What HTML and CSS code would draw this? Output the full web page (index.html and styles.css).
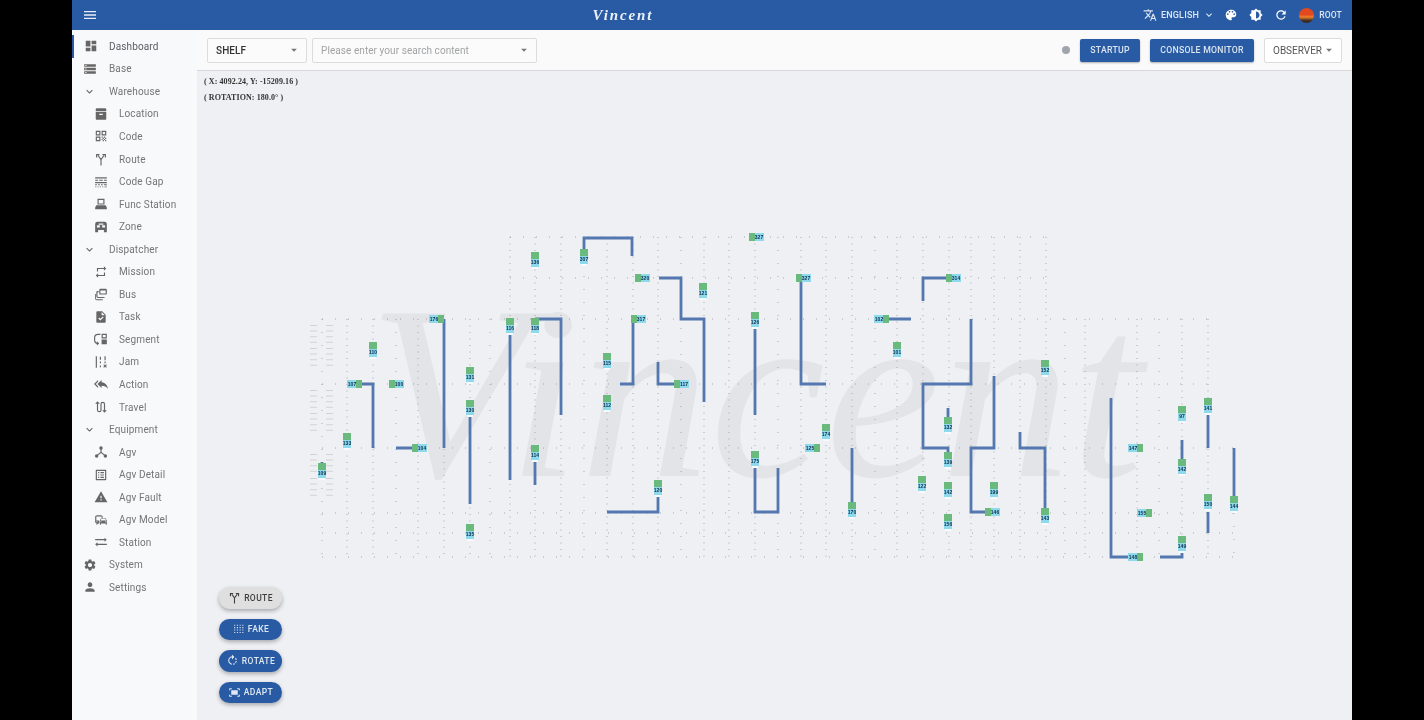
FILE: index.html
```html
<!DOCTYPE html>
<html lang="en">
<head>
<meta charset="utf-8">
<title>Vincent</title>
<link rel="stylesheet" href="styles.css">
</head>
<body>
<svg class="sprite" width="0" height="0" aria-hidden="true">
<defs>
<symbol id="i-menu" viewBox="0 0 24 24"><path d="M3 18h18v-2H3v2zm0-5h18v-2H3v2zm0-7v2h18V6H3z"/></symbol>
<symbol id="i-dash" viewBox="0 0 24 24"><path d="M3 13h8V3H3v10zm0 8h8v-6H3v6zm10 0h8V11h-8v10zm0-18v6h8V3h-8z"/></symbol>
<symbol id="i-storage" viewBox="0 0 24 24"><path d="M2 20h20v-4H2v4zm2-3h2v2H4v-2zM2 4v4h20V4H2zm4 3H4V5h2v2zm-4 7h20v-4H2v4zm2-3h2v2H4v-2z"/></symbol>
<symbol id="i-chev" viewBox="0 0 24 24"><path d="M16.59 8.59L12 13.17 7.41 8.59 6 10l6 6 6-6z"/></symbol>
<symbol id="i-location" viewBox="0 0 24 24"><path fill-rule="evenodd" d="M5 2h14a2 2 0 0 1 2 2v3H3V4a2 2 0 0 1 2-2zM3 8h18v12a2 2 0 0 1-2 2H5a2 2 0 0 1-2-2V8zm6 3.500v2h6v-2H9z"/></symbol>
<symbol id="i-qr" viewBox="0 0 24 24"><path d="M3 11h8V3H3v8zm2-6h4v4H5V5zM3 21h8v-8H3v8zm2-6h4v4H5v-4zM13 3v8h8V3h-8zm6 6h-4V5h4v4zM13 13h2v2h-2zM15 15h2v2h-2zM13 17h2v2h-2zM15 19h2v2h-2zM17 17h2v2h-2zM17 13h2v2h-2zM19 15h2v2h-2zM19 19h2v2h-2z"/></symbol>
<symbol id="i-route" viewBox="0 0 24 24"><path fill="none" stroke="currentColor" stroke-width="2" d="M12 23V13L7 6M12 13l5-7M4.500 9.500V4.500H9.500M14.500 4.500h5v5"/></symbol>
<symbol id="i-gap" viewBox="0 0 24 24"><path d="M2 4h20v2H2zM2 8h5v2H2zM9 8h6v2H9zM17 8h5v2h-5zM2 12h20v2H2zM2 16h3v1.500H2zM7 16h3v1.500H7zM12 16h3v1.500h-3zM17 16h5v1.500h-5zM2 19.500h2V21H2zM6 19.500h2V21H6zM10 19.500h2V21h-2zM14 19.500h2V21h-2zM18 19.500h4V21h-4z"/></symbol>
<symbol id="i-func" viewBox="0 0 24 24"><path fill-rule="evenodd" d="M6 3h12v10H6V3zm2 2v6h8V5H8zM4 14h16l2 4v3H2v-3l2-4z"/></symbol>
<symbol id="i-zone" viewBox="0 0 24 24"><path fill-rule="evenodd" d="M6 3h12a4 4 0 0 1 4 4v14h-5v-4H7v4H2V7a4 4 0 0 1 4-4zm-1 6v4h5V9H5zm9 0v4h5V9h-5zM8 6v2h8V6H8z"/></symbol>
<symbol id="i-repeat" viewBox="0 0 24 24"><path d="M7 7h10v3l4-4-4-4v3H5v6h2V7zm10 10H7v-3l-4 4 4 4v-3h12v-6h-2v4z"/></symbol>
<symbol id="i-bus" viewBox="0 0 24 24"><path fill-rule="evenodd" d="M11 3h9a2 2 0 0 1 2 2v6a2 2 0 0 1-2 2h-9a2 2 0 0 1-2-2V5a2 2 0 0 1 2-2zm0 3v5h9V6h-9zM6 7h2v2H6v7a1 1 0 0 0 1 1h11v2H7a3 3 0 0 1-3-3V9a2 2 0 0 1 2-2zM2 12h1.500v8a1 1 0 0 0 1 1H15v1.500H4.500A2.500 2.500 0 0 1 2 20v-8z"/></symbol>
<symbol id="i-task" viewBox="0 0 24 24"><path d="M14 2H6c-1.100 0-1.990.9-1.990 2L4 20c0 1.100.89 2 1.990 2H18c1.100 0 2-.9 2-2V8l-6-6zm-3.060 16L7.400 14.460l1.410-1.410 2.120 2.120 4.240-4.240 1.410 1.410L10.940 18zM13 9V3.500L18.500 9H13z"/></symbol>
<symbol id="i-segment" viewBox="0 0 24 24"><path fill-rule="evenodd" d="M13 3h9v8h-9V3zm2 2v4h5V5h-5zM13 13h9v8h-9v-8zM11 5H7a5 5 0 0 0-5 5v4a5 5 0 0 0 3 4.600V16l4 3.500L5 23v-2.200A7 7 0 0 1 0 14v-4a7 7 0 0 1 7-7h4v2z"/></symbol>
<symbol id="i-jam" viewBox="0 0 24 24"><path d="M3 2h2v20H3zM10 3h2v5h-2zM10 11h2v3h-2zM10 18h2v3h-2zM18 2h2v7h-2zM18 11h2v3h-2zM16 17l1.200-1.200 1.800 1.800 1.800-1.800L22 17l-1.800 1.800L22 20.600l-1.200 1.200-1.800-1.800-1.800 1.800-1.200-1.200 1.800-1.800z"/></symbol>
<symbol id="i-reply" viewBox="0 0 24 24"><path d="M7 8V5l-7 7 7 7v-3l-4-4 4-4zm6 1V5l-7 7 7 7v-4.100c5 0 8.500 1.600 11 5.100-1-5-4-10-11-11z"/></symbol>
<symbol id="i-travel" viewBox="0 0 24 24"><path d="M6 2L2 6.500h3V17a4 4 0 0 0 4 4 4 4 0 0 0 4-4V7a2 2 0 0 1 4 0v10.500h-3L18 22l4-4.500h-3V7a4 4 0 0 0-4-4 4 4 0 0 0-4 4v10a2 2 0 0 1-4 0V6.500h3z"/></symbol>
<symbol id="i-agv" viewBox="0 0 24 24"><circle cx="12" cy="5" r="3"/><circle cx="4.500" cy="19" r="3"/><circle cx="19.500" cy="19" r="3"/><path d="M11 7h2v5l6 5-1.300 1.500-5.700-4.700-5.700 4.700L5 17l6-5z"/></symbol>
<symbol id="i-list" viewBox="0 0 24 24"><path d="M19 5v14H5V5h14m1.100-2H3.900c-.5 0-.9.4-.9.9v16.200c0 .4.4.9.9.9h16.200c.4 0 .9-.5.9-.9V3.900c0-.5-.5-.9-.9-.9zM11 7h6v2h-6V7zm0 4h6v2h-6v-2zm0 4h6v2h-6zM7 7h2v2H7zm0 4h2v2H7zm0 4h2v2H7z"/></symbol>
<symbol id="i-warn" viewBox="0 0 24 24"><path d="M1 21h22L12 2 1 21zm12-3h-2v-2h2v2zm0-4h-2v-4h2v4z"/></symbol>
<symbol id="i-commute" viewBox="0 0 24 24"><path d="M12 4H5C3.340 4 2 5.340 2 7v8c0 1.660 1.340 3 3 3l-1 1v1h1l2-2.030L9 18v-5H4V5.980L13 6v2h2V7c0-1.660-1.340-3-3-3zM5 14c.55 0 1 .45 1 1s-.45 1-1 1-1-.45-1-1 .45-1 1-1zm15.570-4.340c-.14-.4-.52-.66-.97-.66h-7.190c-.46 0-.83.26-.98.66L10 13.770l.01 5.510c0 .38.31.72.69.72h.62c.38 0 .68-.38.68-.76V18h8v1.240c0 .38.31.76.69.76h.61c.38 0 .69-.34.69-.72l.01-1.370v-4.140l-1.430-4.070zm-8.160.34h7.190l1.030 3h-9.250l1.030-3zM12 16c-.55 0-1-.45-1-1s.45-1 1-1 1 .45 1 1-.45 1-1 1zm8 0c-.55 0-1-.45-1-1s.45-1 1-1 1 .45 1 1-.45 1-1 1z"/></symbol>
<symbol id="i-station" viewBox="0 0 24 24"><path d="M22 8l-4-3.500V7H2v2h16v2.500zM2 16l4 3.500V17h16v-2H6v-2.500z"/></symbol>
<symbol id="i-gear" viewBox="0 0 24 24"><path d="M19.140 12.940c.04-.3.06-.61.06-.94 0-.32-.02-.64-.07-.94l2.030-1.580c.18-.14.23-.41.12-.61l-1.920-3.320c-.12-.22-.37-.29-.59-.22l-2.390.96c-.5-.38-1.030-.7-1.620-.94l-.36-2.540c-.04-.24-.24-.41-.48-.41h-3.840c-.24 0-.43.17-.47.41l-.36 2.540c-.59.24-1.130.57-1.620.94l-2.390-.96c-.22-.08-.47 0-.59.22L2.740 8.870c-.12.21-.08.47.12.61l2.030 1.580c-.05.3-.09.63-.09.94s.02.64.07.94l-2.030 1.580c-.18.14-.23.41-.12.61l1.920 3.320c.12.22.37.29.59.22l2.390-.96c.5.38 1.030.7 1.620.94l.36 2.54c.05.24.24.41.48.41h3.840c.24 0 .44-.17.47-.41l.36-2.540c.59-.24 1.130-.56 1.620-.94l2.390.96c.22.08.47 0 .59-.22l1.920-3.320c.12-.22.07-.47-.12-.61l-2.010-1.580zM12 15.600c-1.980 0-3.600-1.620-3.600-3.600s1.620-3.600 3.600-3.600 3.600 1.620 3.600 3.600-1.620 3.600-3.600 3.600z"/></symbol>
<symbol id="i-person" viewBox="0 0 24 24"><path d="M12 12c2.210 0 4-1.790 4-4s-1.790-4-4-4-4 1.790-4 4 1.790 4 4 4zm0 2c-2.670 0-8 1.340-8 4v2h16v-2c0-2.660-5.330-4-8-4z"/></symbol>
<symbol id="i-translate" viewBox="0 0 24 24"><path d="M12.870 15.070l-2.540-2.510.03-.03c1.740-1.940 2.980-4.170 3.710-6.530H17V4h-7V2H8v2H1v1.990h11.170C11.500 7.920 10.440 9.750 9 11.350 8.070 10.320 7.300 9.190 6.690 8h-2c.73 1.630 1.730 3.170 2.980 4.560l-5.090 5.020L4 19l5-5 3.110 3.110.76-2.040zM18.500 10h-2L12 22h2l1.120-3h4.750L21 22h2l-4.500-12zm-2.620 7l1.620-4.330L19.120 17h-3.240z"/></symbol>
<symbol id="i-palette" viewBox="0 0 24 24"><path d="M12 3c-4.970 0-9 4.030-9 9s4.030 9 9 9c.83 0 1.500-.67 1.500-1.500 0-.39-.15-.74-.39-1.010-.23-.26-.38-.61-.38-.99 0-.83.67-1.500 1.500-1.500H16c2.760 0 5-2.240 5-5 0-4.420-4.030-8-9-8zm-5.500 9c-.83 0-1.500-.67-1.500-1.500S5.670 9 6.500 9 8 9.670 8 10.500 7.330 12 6.500 12zm3-4C8.670 8 8 7.330 8 6.500S8.670 5 9.500 5s1.500.67 1.500 1.500S10.330 8 9.500 8zm5 0c-.83 0-1.500-.67-1.500-1.500S13.670 5 14.500 5s1.500.67 1.500 1.500S15.330 8 14.500 8zm3 4c-.83 0-1.500-.67-1.500-1.500S16.670 9 17.500 9s1.500.67 1.500 1.500-.67 1.500-1.500 1.500z"/></symbol>
<symbol id="i-bright" viewBox="0 0 24 24"><path d="M20 15.310L23.310 12 20 8.690V4h-4.690L12 .69 8.690 4H4v4.690L.69 12 4 15.310V20h4.690L12 23.310 15.310 20H20v-4.690zM12 18V6c3.310 0 6 2.690 6 6s-2.690 6-6 6z"/></symbol>
<symbol id="i-refresh" viewBox="0 0 24 24"><path d="M17.650 6.350C16.200 4.900 14.210 4 12 4c-4.420 0-7.990 3.580-7.990 8s3.570 8 7.990 8c3.730 0 6.840-2.550 7.730-6h-2.080c-.82 2.330-3.040 4-5.650 4-3.310 0-6-2.690-6-6s2.690-6 6-6c1.660 0 3.140.69 4.220 1.780L13 11h7V4l-2.350 2.350z"/></symbol>
<symbol id="i-rotate" viewBox="0 0 24 24"><path d="M15.550 5.550L11 1v3.070C7.060 4.560 4 7.920 4 12s3.050 7.440 7 7.930v-2.020c-2.840-.48-5-2.940-5-5.910s2.160-5.430 5-5.910V10l4.550-4.450zM19.930 11c-.17-1.390-.72-2.730-1.620-3.890l-1.420 1.420c.54.75.88 1.600 1.020 2.470h2.020zM13 17.900v2.020c1.390-.17 2.740-.71 3.900-1.610l-1.440-1.440c-.75.54-1.590.89-2.460 1.030zm3.890-2.420l1.420 1.410c.9-1.160 1.450-2.500 1.620-3.890h-2.020c-.14.87-.48 1.720-1.020 2.480z"/></symbol>
<symbol id="i-fit" viewBox="0 0 24 24"><path d="M17 4h3c1.100 0 2 .9 2 2v2h-2V6h-3V4zM4 8V6h3V4H4c-1.100 0-2 .9-2 2v2h2zm16 8v2h-3v2h3c1.100 0 2-.9 2-2v-2h-2zM7 18H4v-2H2v2c0 1.100.9 2 2 2h3v-2zM18 8H6v8h12V8z"/></symbol>
<symbol id="i-grid" viewBox="0 0 24 24"><path fill="none" stroke="currentColor" stroke-width="2" stroke-dasharray="2 2.500" d="M5 3v18M10 3v18M15 3v18M20 3v18"/></symbol>
<symbol id="i-caret" viewBox="0 0 24 24"><path d="M7 10l5 5 5-5z"/></symbol>
<g id="vn"><rect x="-4" y="-8" width="8" height="7" fill="#69ba7c"/><rect x="-4" y="-1" width="8" height="8" fill="#8fd9ec"/><rect x="-3" y="7" width="6" height="2" fill="#f7fbfd"/></g>
<g id="hn"><rect x="-6" y="-4" width="6" height="8" fill="#69ba7c"/><rect x="0" y="-4" width="9" height="8" fill="#8fd9ec"/></g>
<g id="hr"><rect x="0" y="-4" width="6" height="8" fill="#69ba7c"/><rect x="-9" y="-4" width="9" height="8" fill="#8fd9ec"/></g>
</defs>
</svg>

<div class="app">
  <header class="topbar">
    <svg class="ic ic-menu"><use href="#i-menu"/></svg>
    <div class="brand">Vincent</div>
    <div class="top-actions">
      <svg class="ic ic-top"><use href="#i-translate"/></svg>
      <span class="lang">ENGLISH</span>
      <svg class="ic ic-lang"><use href="#i-chev"/></svg>
      <svg class="ic ic-top2"><use href="#i-palette"/></svg>
      <svg class="ic ic-top2"><use href="#i-bright"/></svg>
      <svg class="ic ic-top2"><use href="#i-refresh"/></svg>
      <span class="avatar"></span>
      <span class="user">ROOT</span>
    </div>
  </header>
  <div class="body">
    <nav class="side">
      <a class="item active"><svg class="ic"><use href="#i-dash"/></svg><span>Dashboard</span></a>
      <a class="item"><svg class="ic"><use href="#i-storage"/></svg><span>Base</span></a>
      <a class="item"><svg class="ic chev"><use href="#i-chev"/></svg><span>Warehouse</span></a>
      <a class="item sub"><svg class="ic"><use href="#i-location"/></svg><span>Location</span></a>
      <a class="item sub"><svg class="ic"><use href="#i-qr"/></svg><span>Code</span></a>
      <a class="item sub"><svg class="ic"><use href="#i-route"/></svg><span>Route</span></a>
      <a class="item sub"><svg class="ic"><use href="#i-gap"/></svg><span>Code Gap</span></a>
      <a class="item sub"><svg class="ic"><use href="#i-func"/></svg><span>Func Station</span></a>
      <a class="item sub"><svg class="ic"><use href="#i-zone"/></svg><span>Zone</span></a>
      <a class="item"><svg class="ic chev"><use href="#i-chev"/></svg><span>Dispatcher</span></a>
      <a class="item sub"><svg class="ic"><use href="#i-repeat"/></svg><span>Mission</span></a>
      <a class="item sub"><svg class="ic"><use href="#i-bus"/></svg><span>Bus</span></a>
      <a class="item sub"><svg class="ic"><use href="#i-task"/></svg><span>Task</span></a>
      <a class="item sub"><svg class="ic"><use href="#i-segment"/></svg><span>Segment</span></a>
      <a class="item sub"><svg class="ic"><use href="#i-jam"/></svg><span>Jam</span></a>
      <a class="item sub"><svg class="ic"><use href="#i-reply"/></svg><span>Action</span></a>
      <a class="item sub"><svg class="ic"><use href="#i-travel"/></svg><span>Travel</span></a>
      <a class="item"><svg class="ic chev"><use href="#i-chev"/></svg><span>Equipment</span></a>
      <a class="item sub"><svg class="ic"><use href="#i-agv"/></svg><span>Agv</span></a>
      <a class="item sub"><svg class="ic"><use href="#i-list"/></svg><span>Agv Detail</span></a>
      <a class="item sub"><svg class="ic"><use href="#i-warn"/></svg><span>Agv Fault</span></a>
      <a class="item sub"><svg class="ic"><use href="#i-commute"/></svg><span>Agv Model</span></a>
      <a class="item sub"><svg class="ic"><use href="#i-station"/></svg><span>Station</span></a>
      <a class="item"><svg class="ic"><use href="#i-gear"/></svg><span>System</span></a>
      <a class="item"><svg class="ic"><use href="#i-person"/></svg><span>Settings</span></a>
    </nav>
    <main class="main">
      <div class="toolbar">
        <div class="select sel-type"><b>SHELF</b><svg class="ic caret"><use href="#i-caret"/></svg></div>
        <div class="select sel-search"><span>Please enter your search content</span><svg class="ic caret"><use href="#i-caret"/></svg></div>
        <div class="spacer"></div>
        <span class="status"></span>
        <button class="btn">STARTUP</button>
        <button class="btn">CONSOLE MONITOR</button>
        <div class="select sel-role"><span>OBSERVER</span><svg class="ic caret"><use href="#i-caret"/></svg></div>
      </div>
      <div class="canvas">
        <svg class="map" viewBox="197 71 1155 649">
          <text class="mark" x="368" y="476" textLength="775" lengthAdjust="spacingAndGlyphs">Vincent</text>
          <path class="shelf" d="M313.500 325v20M329.500 325v20M313.500 348v22M329.500 348v22M313.500 390v20M329.500 390v20M313.500 413v20M329.500 413v20M313.500 454v20M329.500 454v20M313.500 478v20M329.500 478v20"/>
          <path class="dot-s" d="M322 319v238M396 319v238M490 319v238M584 237v320M681 237v320M778 237v320M875 237v320M1065 319v238M1159 319v238M1234 448v109"/>
          <path class="dot-d" d="M347 319v238M373 319v238M418 319v238M444 319v238M470 319v238M510 237v320M535 237v320M561 237v320M607 237v320M633 237v320M658 237v320M704 237v320M729 237v320M755 237v320M801 237v320M826 237v320M852 237v320M897 237v320M923 237v320M949 237v320M971 237v320M994 237v320M1020 237v320M1046 237v320M1085 319v238M1137 319v238M1182 319v238M1208 319v238"/>
          <path class="dot-h" d="M510 237h537M510 278h537M322 319h886M322 384h886M322 448h912M322 513h912M322 533h912M322 557h912"/>
          <path class="rail" d="M584 255V238H632V256M659 278H681V319H704V402M535 319H561V415M510 335V480M633 320V384H620M658 362V384H680M755 327V415M755 465V512H778V468M801 280V384H826M883 319H911M923 301V278H950M971 319V384H923V448H948V458M948 408V420M994 376V448H971V512H985M1020 432V448H1045V512M852 448V510M444 319V448M356 384H373V448M396 448H418M470 415V504M322 462V468M535 462V485M607 512H658V490M1111 398V557H1135M1160 557H1182V550M1182 440V462M1208 412V448M1234 448V496M1208 512V533"/>
          <g class="nodes">
            <g transform="translate(535 260)"><use href="#vn"/><text y="4">136</text></g>
            <g transform="translate(584 257)"><use href="#vn"/><text y="4">307</text></g>
            <g transform="translate(703 291)"><use href="#vn"/><text y="4">121</text></g>
            <g transform="translate(373 350)"><use href="#vn"/><text y="4">110</text></g>
            <g transform="translate(470 375)"><use href="#vn"/><text y="4">131</text></g>
            <g transform="translate(470 408)"><use href="#vn"/><text y="4">130</text></g>
            <g transform="translate(347 441)"><use href="#vn"/><text y="4">133</text></g>
            <g transform="translate(322 471)"><use href="#vn"/><text y="4">109</text></g>
            <g transform="translate(510 326)"><use href="#vn"/><text y="4">116</text></g>
            <g transform="translate(535 326)"><use href="#vn"/><text y="4">118</text></g>
            <g transform="translate(607 361)"><use href="#vn"/><text y="4">115</text></g>
            <g transform="translate(607 403)"><use href="#vn"/><text y="4">112</text></g>
            <g transform="translate(535 453)"><use href="#vn"/><text y="4">114</text></g>
            <g transform="translate(658 488)"><use href="#vn"/><text y="4">120</text></g>
            <g transform="translate(755 320)"><use href="#vn"/><text y="4">126</text></g>
            <g transform="translate(755 459)"><use href="#vn"/><text y="4">175</text></g>
            <g transform="translate(826 432)"><use href="#vn"/><text y="4">174</text></g>
            <g transform="translate(897 350)"><use href="#vn"/><text y="4">101</text></g>
            <g transform="translate(948 425)"><use href="#vn"/><text y="4">132</text></g>
            <g transform="translate(948 460)"><use href="#vn"/><text y="4">139</text></g>
            <g transform="translate(922 484)"><use href="#vn"/><text y="4">122</text></g>
            <g transform="translate(948 490)"><use href="#vn"/><text y="4">142</text></g>
            <g transform="translate(994 490)"><use href="#vn"/><text y="4">199</text></g>
            <g transform="translate(948 522)"><use href="#vn"/><text y="4">156</text></g>
            <g transform="translate(852 510)"><use href="#vn"/><text y="4">170</text></g>
            <g transform="translate(1045 368)"><use href="#vn"/><text y="4">152</text></g>
            <g transform="translate(1045 516)"><use href="#vn"/><text y="4">143</text></g>
            <g transform="translate(470 532)"><use href="#vn"/><text y="4">135</text></g>
            <g transform="translate(1182 414)"><use href="#vn"/><text y="4">97</text></g>
            <g transform="translate(1208 406)"><use href="#vn"/><text y="4">141</text></g>
            <g transform="translate(1182 467)"><use href="#vn"/><text y="4">142</text></g>
            <g transform="translate(1208 502)"><use href="#vn"/><text y="4">150</text></g>
            <g transform="translate(1234 504)"><use href="#vn"/><text y="4">144</text></g>
            <g transform="translate(1182 544)"><use href="#vn"/><text y="4">149</text></g>
            <g transform="translate(641 278)"><use href="#hn"/><text x="4" y="2">320</text></g>
            <g transform="translate(755 237)"><use href="#hn"/><text x="4" y="2">327</text></g>
            <g transform="translate(802 278)"><use href="#hn"/><text x="4" y="2">327</text></g>
            <g transform="translate(952 278)"><use href="#hn"/><text x="4" y="2">314</text></g>
            <g transform="translate(637 319)"><use href="#hn"/><text x="4" y="2">317</text></g>
            <g transform="translate(438 319)"><use href="#hr"/><text x="-4" y="2">176</text></g>
            <g transform="translate(356 384)"><use href="#hr"/><text x="-4" y="2">107</text></g>
            <g transform="translate(395 384)"><use href="#hn"/><text x="4" y="2">100</text></g>
            <g transform="translate(680 384)"><use href="#hn"/><text x="4" y="2">117</text></g>
            <g transform="translate(418 448)"><use href="#hn"/><text x="4" y="2">104</text></g>
            <g transform="translate(814 448)"><use href="#hr"/><text x="-4" y="2">125</text></g>
            <g transform="translate(883 319)"><use href="#hr"/><text x="-4" y="2">102</text></g>
            <g transform="translate(991 512)"><use href="#hn"/><text x="4" y="2">146</text></g>
            <g transform="translate(1137 448)"><use href="#hr"/><text x="-4" y="2">147</text></g>
            <g transform="translate(1146 513)"><use href="#hr"/><text x="-4" y="2">155</text></g>
            <g transform="translate(1137 557)"><use href="#hr"/><text x="-4" y="2">148</text></g>
          </g>
        </svg>
        <div class="coords">
          <div>( X: 4092.24, Y: -15209.16 )</div>
          <div>( ROTATION: 180.0° )</div>
        </div>
        <div class="fabs">
          <button class="fab off"><svg class="ic"><use href="#i-route"/></svg>ROUTE</button>
          <button class="fab"><svg class="ic"><use href="#i-grid"/></svg>FAKE</button>
          <button class="fab"><svg class="ic"><use href="#i-rotate"/></svg>ROTATE</button>
          <button class="fab"><svg class="ic"><use href="#i-fit"/></svg>ADAPT</button>
        </div>
      </div>
    </main>
  </div>
</div>
</body>
</html>
```

FILE: styles.css
```css
* { box-sizing: border-box; }
html, body { margin: 0; height: 100%; background: #000; overflow: hidden; }
body { font-family: Roboto, "Liberation Sans", sans-serif; }
.sprite { position: absolute; }
.ic { display: block; width: 16px; height: 16px; fill: currentColor; flex: none; }

.app { width: 1280px; height: 720px; margin: 0 auto; display: flex; flex-direction: column; background: #eef0f4; filter: blur(.3px); }

.topbar { height: 30px; flex: none; background: #285ba3; color: #fff; display: flex; align-items: center; padding: 0 10px; position: relative; }
.ic-menu { width: 16px; height: 16px; color: #e8eef7; }
.brand { position: absolute; left: 0; width: 1102px; text-align: center; font: italic bold 15px "Liberation Serif", serif; letter-spacing: 1.9px; pointer-events: none; color: #eef2f8; }
.top-actions { margin-left: auto; display: flex; align-items: center; font-size: 9px; font-weight: 500; letter-spacing: .2px; color: #dfe7f3; }
.ic-top { width: 14px; height: 14px; margin-right: 4px; }
.lang { margin-right: 4px; }
.ic-lang { width: 12px; height: 12px; margin-right: 9px; }
.ic-top2 { width: 14px; height: 14px; margin-right: 11px; color: #fff; }
.avatar { width: 15px; height: 15px; border-radius: 50%; margin: 0 5px 0 0; background: linear-gradient(180deg, #e2491f 0 45%, #f0802a 60%, #3a2a20 85%); }
.user { font-size: 8.500px; }

.body { flex: 1; min-height: 0; display: flex; }

.side { width: 125px; flex: none; background: #f8f9fa; padding-top: 5px; }
.item { height: 22.55px; display: flex; align-items: center; padding-left: 11px; gap: 12px; font-size: 10px; letter-spacing: .13px; position: relative; color: #737577; }
.item .ic { width: 14px; height: 14px; color: #666; }
.item .chev { width: 13px; height: 13px; margin-right: 1px; }
.item.sub { padding-left: 22px; gap: 11px; }
.item.active { color: #5a5c60; padding-left: 12px; gap: 11px; }
.item.active::before { content: ""; position: absolute; left: 0; top: 0; bottom: 0; width: 2px; background: #285ba3; }

.main { flex: 1; min-width: 0; display: flex; flex-direction: column; }
.toolbar { height: 41px; flex: none; background: #fafafa; border-bottom: 1px solid #d6d8db; display: flex; align-items: center; padding: 0 10px; gap: 5px; }
.select { height: 25px; display: flex; align-items: center; justify-content: space-between; background: #fbfbfb; border: 1px solid #dcdcdc; border-radius: 2px; padding: 0 5px 0 8px; font-size: 10px; color: #555; }
.select b { font-weight: 500; color: #333; letter-spacing: .1px; }
.sel-type { width: 100px; }
.sel-search { width: 225px; color: #a2a3a5; letter-spacing: .07px; }
.caret { width: 14px; height: 14px; color: #777; }
.spacer { flex: 1; }
.status { width: 8px; height: 8px; border-radius: 50%; background: #9fa4ad; margin-right: 5px; }
.btn { height: 23px; padding: 0; border: 0; border-radius: 2px; background: #285ba3; color: #dbe4f1; font: 500 8.700px Roboto, sans-serif; letter-spacing: .25px; box-shadow: 0 1px 2px rgba(0,0,0,.3); margin-right: 5px; width: 60px; }
.btn + .btn { width: 104px; }
.sel-role { width: 78px; background: #fff; color: #555; padding: 0 5px 0 8px; font-size: 10px; }

.canvas { flex: 1; min-height: 0; position: relative; overflow: hidden; }
.map { position: absolute; inset: 0; width: 1155px; height: 649px; }
.mark { font: italic 248px "Liberation Serif", serif; fill: #e3e4e7; }
.shelf { fill: none; stroke: #cfd2d6; stroke-width: 7; stroke-dasharray: 1 4.600; }
.dot-s, .dot-d, .dot-h { fill: none; stroke: #8f9296; stroke-width: 1; opacity: .75; }
.dot-s { stroke-dasharray: 1 12; }
.dot-d { stroke-dasharray: 1 5.500; }
.dot-h { stroke-dasharray: 1 12; }
.rail { fill: none; stroke: #5377ae; stroke-width: 2.800; }
.nodes text { font: 700 5px "Liberation Sans", sans-serif; fill: #0c2f4f; text-anchor: middle; }

.coords { position: absolute; left: 7px; top: 3px; font: 700 8px/16px "Liberation Serif", serif; color: #333; letter-spacing: .08px; }

.fabs { position: absolute; left: 22px; bottom: 17px; display: flex; flex-direction: column; gap: 10px; }
.fab { width: 63px; height: 21.500px; border: 0; border-radius: 11px; background: #285ba3; color: #dfe7f3; font: 500 8.500px Roboto, sans-serif; letter-spacing: .4px; display: flex; align-items: center; justify-content: center; gap: 3px; padding: 0; box-shadow: 0 2px 4px rgba(0,0,0,.3); }
.fab .ic { width: 13px; height: 13px; }
.fab.off { background: #dfdfdf; color: #3e3e3e; }
```
